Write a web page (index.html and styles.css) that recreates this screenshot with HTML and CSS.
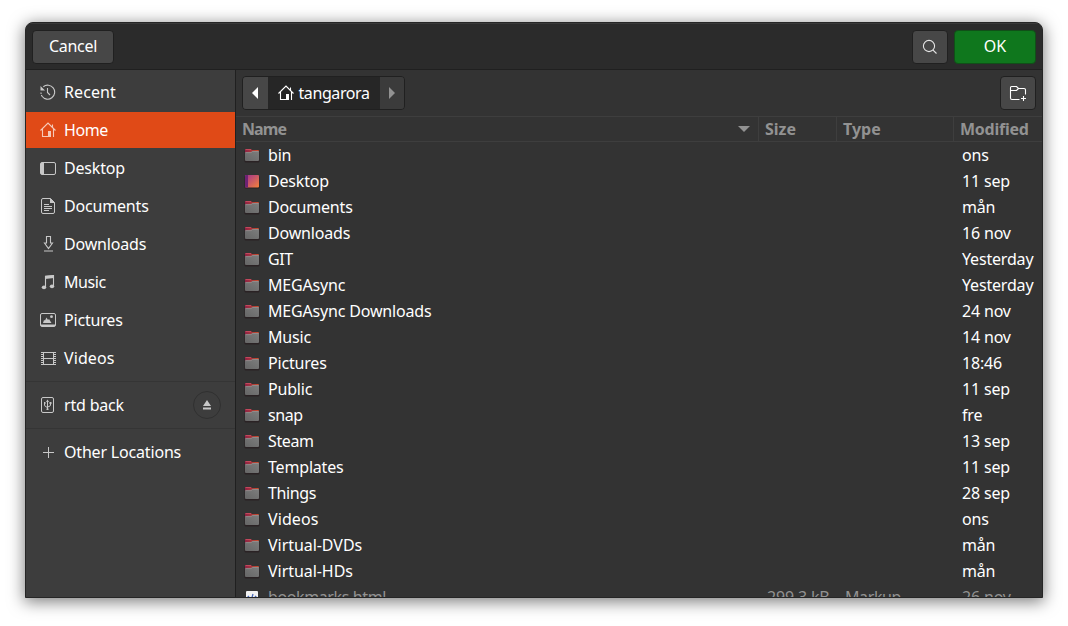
FILE: index.html
```html
<!DOCTYPE html>
<html lang="en">
<head>
<meta charset="utf-8">
<title>Open Folder</title>
<link rel="stylesheet" href="styles.css">
</head>
<body>
<svg class="defs" aria-hidden="true">
  <defs>
    <linearGradient id="gRed"><stop offset="0" stop-color="#8e2146"/><stop offset="1" stop-color="#c9502e"/></linearGradient>
    <linearGradient id="gGrey" x1="0" y1="1" x2="1" y2="0"><stop offset="0" stop-color="#666"/><stop offset="1" stop-color="#7d7d7d"/></linearGradient>
    <linearGradient id="gDesk" x1="0" y1="0" x2="1" y2="1"><stop offset="0" stop-color="#a03290"/><stop offset="1" stop-color="#f4813a"/></linearGradient>
    <symbol id="folder" viewBox="0 0 16 16">
      <rect x=".5" y="3" width="15" height="12.500" rx="1.200" fill="#2a2224"/>
      <path d="M1 6V3q0-1 1-1h5l1 1h6q1 0 1 1v2z" fill="url(#gRed)"/>
      <path d="M1.500 2.500h5.500" stroke="#c2485c" stroke-width="1"/>
      <path d="M1 6q0-.8.8-.8H7L8.300 4H14.200q.8 0 .8.8V13q0 1-1 1H2q-1 0-1-1z" fill="url(#gGrey)"/>
      <path d="M1.500 5.600H7.200L8.500 4.500H14.500" fill="none" stroke="#958f8f" stroke-width=".8"/>
    </symbol>
    <symbol id="home" viewBox="0 0 16 16">
      <g fill="none" stroke="currentColor" stroke-width="1.100"><path d="M.5 8.500L8 1l7.500 7.500M2.500 7v7.500h6M13.500 7v8M12.500 5.500v-3"/></g>
      <path d="M8 9h3v6H8z" fill="currentColor"/>
    </symbol>
  </defs>
</svg>
<div class="window">
  <header class="titlebar">
    <button class="btn cancel">Cancel</button>
    <span class="spacer"></span>
    <button class="btn search"><svg class="icon" viewBox="0 0 16 16"><g fill="none" stroke="currentColor" stroke-width="1.100"><circle cx="7" cy="7" r="5.600"/><path d="M10.800 10.800l3.700 3.700"/></g></svg></button>
    <button class="btn ok">OK</button>
  </header>
  <div class="body">
    <nav class="sidebar">
      <a class="place"><svg class="icon" viewBox="0 0 16 16"><g fill="none" stroke="currentColor" stroke-width="1.100"><path d="M3.300 2.700A7 7 0 1 1 2 12.300" /><path d="M1 8.500a7 7 0 0 0 1 3.800" stroke-dasharray="1.500 1"/><path d="M7.500 4v4.500l2.500 2.500"/></g><path d="M.5 2v4.500H5z" fill="currentColor"/></svg><span class="wide">Recent</span></a>
      <a class="place active"><svg class="icon"><use href="#home"/></svg><span class="tight">Home</span></a>
      <a class="place"><svg class="icon" viewBox="0 0 16 16"><rect x=".5" y="2.500" width="15" height="12" rx="1.500" fill="none" stroke="currentColor"/><path d="M1 3h3v11H1z" fill="currentColor"/></svg><span>Desktop</span></a>
      <a class="place"><svg class="icon" viewBox="0 0 16 16"><path d="M10.500.5H3Q1.500.5 1.500 2v12Q1.500 15.500 3 15.500h10q1.500 0 1.500-1.500V4.500z" fill="none" stroke="currentColor"/><path d="M10 0v5h5z" fill="currentColor"/><path d="M4 6.500h5M4 8.500h8M4 10.500h8M4 12.500h5" stroke="currentColor"/></svg><span>Documents</span></a>
      <a class="place"><svg class="icon" viewBox="0 0 16 16"><path d="M6.500.500h4V7h2L8.500 12.500 4.500 7h2zM4 15h9" fill="none" stroke="currentColor" stroke-width="1.100"/></svg><span>Downloads</span></a>
      <a class="place"><svg class="icon" viewBox="0 0 16 16"><path d="M5.500 13V2.500l8-1V12" fill="none" stroke="currentColor" stroke-width="1.100"/><path d="M5 1.700L14 1v3l-9 1z" fill="currentColor"/><ellipse cx="4" cy="13.300" rx="2.200" ry="1.900" fill="currentColor"/><ellipse cx="12" cy="12.300" rx="2.200" ry="1.900" fill="currentColor"/></svg><span class="tight">Music</span></a>
      <a class="place"><svg class="icon" viewBox="0 0 16 16"><rect x=".5" y="1.500" width="15" height="13" rx="1.500" fill="none" stroke="currentColor"/><path d="M1 12.500h14V14H1zM3 11l1-3 1 .5L6.500 5.500 8 8l1-1 2.500 4z" fill="currentColor"/><circle cx="11.500" cy="4.700" r="1.400" fill="currentColor"/></svg><span>Pictures</span></a>
      <a class="place"><svg class="icon" viewBox="0 0 16 16"><g fill="none" stroke="currentColor"><path d="M3.500 2v13M13.500 2v13M3.500 2.500h10M3.500 8.500h10M3.500 14.500h10"/><path d="M2 2v13M15 2v13" stroke-width="2" stroke-dasharray="1 1"/></g></svg><span class="wide">Videos</span></a>
      <hr class="rule">
      <a class="place"><svg class="icon" viewBox="0 0 16 16"><g fill="none" stroke="currentColor"><rect x="1.500" y=".5" width="12" height="15" rx="1.500"/><path d="M7.500 4v9M4.500 6v2q0 1.500 3 2.500M10.500 5.500V8q0 1.500-3 2"/></g><path d="M6 5l1.500-2.500L9 5zM9.500 5h2v2h-2zM4 5h1.500v2H4zM6.500 11.500h2V13h-2z" fill="currentColor"/></svg><span>rtd back</span>
        <i class="eject"><svg viewBox="0 0 10 10"><path d="M5 0l4 6H1zM1 7.500h8v2H1z" fill="currentColor"/></svg></i></a>
      <hr class="rule">
      <a class="place"><svg class="icon" viewBox="0 0 16 16"><path d="M3 8.500h11M8.500 3v11" stroke="currentColor"/></svg><span>Other Locations</span></a>
    </nav>
    <main class="main">
      <div class="toolbar">
        <div class="pathbar">
          <span class="seg back"><svg viewBox="0 0 10 14"><path d="M8 1v12L2 7z" fill="currentColor"/></svg></span>
          <span class="seg current"><svg class="icon"><use href="#home"/></svg><span class="tight">tangarora</span></span>
          <span class="seg fwd"><svg viewBox="0 0 10 14"><path d="M2 1v12l6-6z" fill="currentColor"/></svg></span>
        </div>
        <span class="spacer"></span>
        <button class="btn newfolder"><svg class="icon18" viewBox="0 0 18 18"><g fill="none" stroke="currentColor" stroke-width="1.100"><path d="M10.500 15.500H3Q1.500 15.500 1.500 14V3.500Q1.500 2.500 2.500 2.500H7.500L9.500 4.500H15q1.500 0 1.500 1.500v4.500M1.500 6.500h6l2-2M14.500 12v5M12 14.500h5"/></g></svg></button>
      </div>
      <div class="row head"><span class="name">Name<svg class="sort" viewBox="0 0 12 6"><path d="M0 0h12L6 6z" fill="currentColor"/></svg></span><span class="size">Size</span><span class="type">Type</span><span class="mod">Modified</span></div>
      <div class="list">
        <div class="row"><svg class="icon"><use href="#folder"/></svg><span class="name">bin</span><span class="mod">ons</span></div>
        <div class="row"><svg class="icon" viewBox="0 0 16 16"><rect x=".5" y="3" width="15" height="12.500" rx="1" fill="#262123"/><rect x="1" y="2" width="14" height="12.500" rx="1" fill="url(#gDesk)"/><path d="M1 3q0-1 1-1h2v12.500H2q-1 0-1-1z" fill="#6d2273"/></svg><span class="name">Desktop</span><span class="mod">11 sep</span></div>
        <div class="row"><svg class="icon"><use href="#folder"/></svg><span class="name">Documents</span><span class="mod">mån</span></div>
        <div class="row"><svg class="icon"><use href="#folder"/></svg><span class="name">Downloads</span><span class="mod">16 nov</span></div>
        <div class="row"><svg class="icon"><use href="#folder"/></svg><span class="name tight">GIT</span><span class="mod">Yesterday</span></div>
        <div class="row"><svg class="icon"><use href="#folder"/></svg><span class="name">MEGAsync</span><span class="mod">Yesterday</span></div>
        <div class="row"><svg class="icon"><use href="#folder"/></svg><span class="name">MEGAsync Downloads</span><span class="mod">24 nov</span></div>
        <div class="row"><svg class="icon"><use href="#folder"/></svg><span class="name">Music</span><span class="mod">14 nov</span></div>
        <div class="row"><svg class="icon"><use href="#folder"/></svg><span class="name">Pictures</span><span class="mod">18:46</span></div>
        <div class="row"><svg class="icon"><use href="#folder"/></svg><span class="name">Public</span><span class="mod">11 sep</span></div>
        <div class="row"><svg class="icon"><use href="#folder"/></svg><span class="name tight">snap</span><span class="mod">fre</span></div>
        <div class="row"><svg class="icon"><use href="#folder"/></svg><span class="name tight">Steam</span><span class="mod">13 sep</span></div>
        <div class="row"><svg class="icon"><use href="#folder"/></svg><span class="name">Templates</span><span class="mod">11 sep</span></div>
        <div class="row"><svg class="icon"><use href="#folder"/></svg><span class="name tight">Things</span><span class="mod">28 sep</span></div>
        <div class="row"><svg class="icon"><use href="#folder"/></svg><span class="name wide">Videos</span><span class="mod">ons</span></div>
        <div class="row"><svg class="icon"><use href="#folder"/></svg><span class="name even">Virtual-DVDs</span><span class="mod">mån</span></div>
        <div class="row"><svg class="icon"><use href="#folder"/></svg><span class="name even">Virtual-HDs</span><span class="mod">mån</span></div>
        <div class="row dim"><svg class="icon" viewBox="0 0 16 16"><rect x="2" y="2" width="12" height="14" rx="1" fill="#f2f2f2"/><path d="M5 7L3 9l2 2M11 7l2 2-2 2M9 5L7 12" fill="none" stroke="#4667b8" stroke-width="1.300"/></svg><span class="name tight">bookmarks.html</span><span class="size">299,3 kB</span><span class="type tight">Markup</span><span class="mod">26 nov</span></div>
      </div>
    </main>
  </div>
</div>
</body>
</html>
```
FILE: styles.css
```css
* { box-sizing: border-box; }
body {
  margin: 0;
  padding: 22px 25px 28px;
  height: 626px;
  overflow: hidden;
  background: #fff;
  color: #fff;
  font: 16px/20px "Noto Sans", "Open Sans", sans-serif;
  letter-spacing: -.18px;
}
.defs { position: absolute; width: 0; height: 0; }
.window {
  display: flex;
  flex-direction: column;
  width: 1018px;
  height: 576px;
  border: 1px solid #262626;
  border-radius: 8px 8px 0 0;
  overflow: hidden;
  background: #333;
  box-shadow: 0 3px 16px 1px rgba(0, 0, 0, .5);
}
.icon { width: 16px; height: 16px; flex: none; display: block; }
.icon18 { width: 18px; height: 18px; display: block; }
.spacer { flex: 1; }
.tight { letter-spacing: -.4px; }
.even { letter-spacing: -.05px; }
.wide { letter-spacing: .1px; }
.titlebar {
  display: flex;
  height: 47px;
  flex: none;
  padding: 6px 6px;
  border-top: 1px solid #3a3a3a;
  border-bottom: 1px solid #202020;
  background: #2b2b2b;
}
.btn {
  display: flex;
  align-items: center;
  justify-content: center;
  height: 34px;
  padding: 0;
  border: 1px solid #202020;
  border-radius: 4px;
  background: #474747;
  color: #fff;
  font: inherit;
}
.cancel, .ok { width: 82px; padding-bottom: 2px; }
.cancel { letter-spacing: -.3px; }
.search { width: 36px; margin-right: 6px; color: #e4e4e4; }
.ok { background: #0f771d; border-color: #105018; }
.body { display: flex; flex: 1; min-height: 0; }
.sidebar {
  display: flex;
  flex-direction: column;
  gap: 2px;
  width: 210px;
  padding-top: 4px;
  border-right: 1px solid #202020;
  background: #3d3d3d;
}
.place {
  display: flex;
  align-items: center;
  height: 36px;
  flex: none;
  padding: 0 14px;
  gap: 8px;
}
.place .icon { color: #c8c8c8; }
.active { background: #e04a17; }
.place.active .icon { color: #f6c9b8; }
.rule { width: 100%; height: 1px; margin: 3px 0; border: 0; background: #353535; }
.eject {
  display: flex;
  align-items: center;
  justify-content: center;
  width: 28px;
  height: 28px;
  margin-left: auto;
  border: 1px solid #303030;
  border-radius: 50%;
  color: #c8c8c8;
}
.eject svg { width: 10px; height: 10px; }
.main { display: flex; flex-direction: column; flex: 1; min-width: 0; }
.toolbar { display: flex; height: 46px; flex: none; padding: 6px 6px; }
.pathbar {
  display: flex;
  width: 163px;
  height: 34px;
  border: 1px solid #202020;
  border-radius: 4px;
  overflow: hidden;
}
.seg { display: flex; align-items: center; justify-content: center; }
.seg svg:not(.icon) { width: 10px; height: 14px; }
.back { width: 25px; padding-right: 1px; background: #474747; }
.current { width: 112px; gap: 4px; background: #262626; }
.fwd { flex: 1; background: #3b3b3b; color: #929292; }
.newfolder { width: 36px; }
.row { display: flex; align-items: center; height: 26px; flex: none; padding-left: 8px; }
.row .icon { margin-right: 8px; }
.row .name { width: 499px; }
.row .size { width: 78px; }
.row .type { width: 117px; }
.row .name:nth-last-child(2) { width: 694px; }
.mod { white-space: nowrap; }
.head {
  align-items: stretch;
  padding-left: 0;
  border: solid #3e3e3e;
  border-width: 1px 0;
  color: #929292;
  font-weight: 700;
  line-height: 24px;
  letter-spacing: -.25px;
}
.head .name { letter-spacing: -.9px; }
.head .size, .head .type { letter-spacing: 0; }
.head span { padding-left: 6px; border-right: 1px solid #3e3e3e; }
.head .name { display: flex; align-items: center; width: 523px; }
.head .mod { border: 0; }
.sort { width: 12px; height: 6px; margin: 0 8px 0 auto; }
.list { flex: 1; overflow: hidden; }
.dim { color: #929292; }
```
